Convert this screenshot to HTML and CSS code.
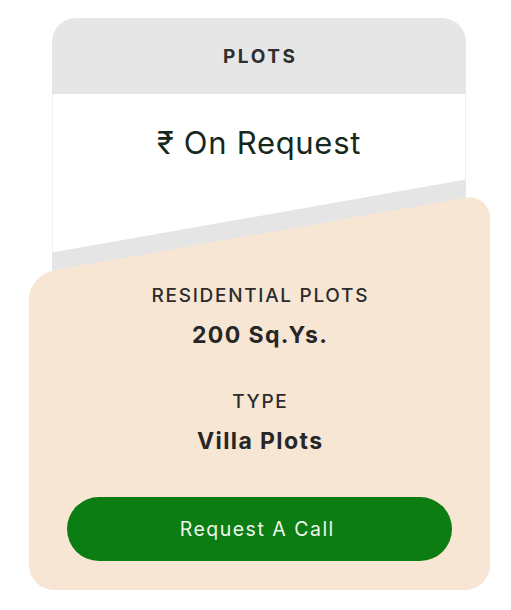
FILE: index.html
```html
<!DOCTYPE html>
<html>
<head>
<meta charset="utf-8">
<link rel="stylesheet" href="styles.css">
</head>
<body>
<div class="wrap">
  <div class="top">
    <div class="head">PLOTS</div>
    <div class="price">₹ On Request</div>
  </div>
  <div class="panel">
    <div class="label">RESIDENTIAL PLOTS</div>
    <div class="value">200 Sq.Ys.</div>
    <div class="label l2">TYPE</div>
    <div class="value">Villa Plots</div>
    <button class="cta">Request A Call</button>
  </div>
</div>
</body>
</html>
```

FILE: styles.css
```css
html, body {
  margin: 0;
  padding: 0;
  background: #ffffff;
}
body {
  font-family: Inter, "Noto Sans", sans-serif;
  width: 511px;
  height: 610px;
  overflow: hidden;
}
.wrap {
  padding-top: 18px;
}
.top {
  position: relative;
  margin-left: 52px;
  width: 414px;
  height: 272px;
  border-radius: 24px 24px 0 0;
  overflow: hidden;
  background: #ffffff;
}
.head {
  height: 76px;
  background: #e6e6e6;
  display: flex;
  align-items: center;
  justify-content: center;
  padding-left: 2.6px;
  font-weight: 700;
  font-size: 19px;
  letter-spacing: 2.6px;
  color: #2e2e2e;
}
.price {
  height: 196px;
  box-sizing: border-box;
  border-left: 1px solid #f0f0f0;
  border-right: 1px solid #f0f0f0;
  padding-top: 30px;
  text-align: center;
  font-size: 31px;
  line-height: 38px;
  letter-spacing: 0.7px;
  color: #16281b;
}
.top::after {
  content: "";
  position: absolute;
  left: 0;
  right: 0;
  top: 198px;
  height: 160px;
  background: #e5e5e5;
  transform: skewY(-10deg);
}
.panel {
  position: relative;
  z-index: 1;
  margin-top: -16px;
  margin-left: 29px;
  width: 461px;
  box-sizing: border-box;
  padding: 11px 38px 29px;
  background: #f8e6d4;
  border-radius: 25px;
  display: flex;
  flex-direction: column;
  align-items: center;
  color: #2b2b2b;
}
.panel::before {
  content: "";
  position: absolute;
  z-index: -1;
  left: 0;
  right: 0;
  top: -40px;
  height: 150px;
  background: #f8e6d4;
  border-radius: 25px;
  transform: skewY(-10deg);
}
.label {
  font-size: 19px;
  line-height: 22px;
  font-weight: 500;
  color: #2c2c2c;
  letter-spacing: 1.7px;
  padding-left: 1.7px;
}
.l2 {
  margin-top: 43px;
}
.value {
  margin-top: 15px;
  font-size: 23px;
  line-height: 26px;
  font-weight: 700;
  color: #262626;
  letter-spacing: 1.4px;
  padding-left: 1.4px;
}
.cta {
  margin-top: 43px;
  width: 385px;
  height: 64px;
  border: none;
  border-radius: 32px;
  background: #0b7d12;
  color: #eef6ee;
  font-family: Inter, "Noto Sans", sans-serif;
  font-size: 19.5px;
  letter-spacing: 1.5px;
  padding-left: 1.5px;
  font-weight: 400;
}
```
